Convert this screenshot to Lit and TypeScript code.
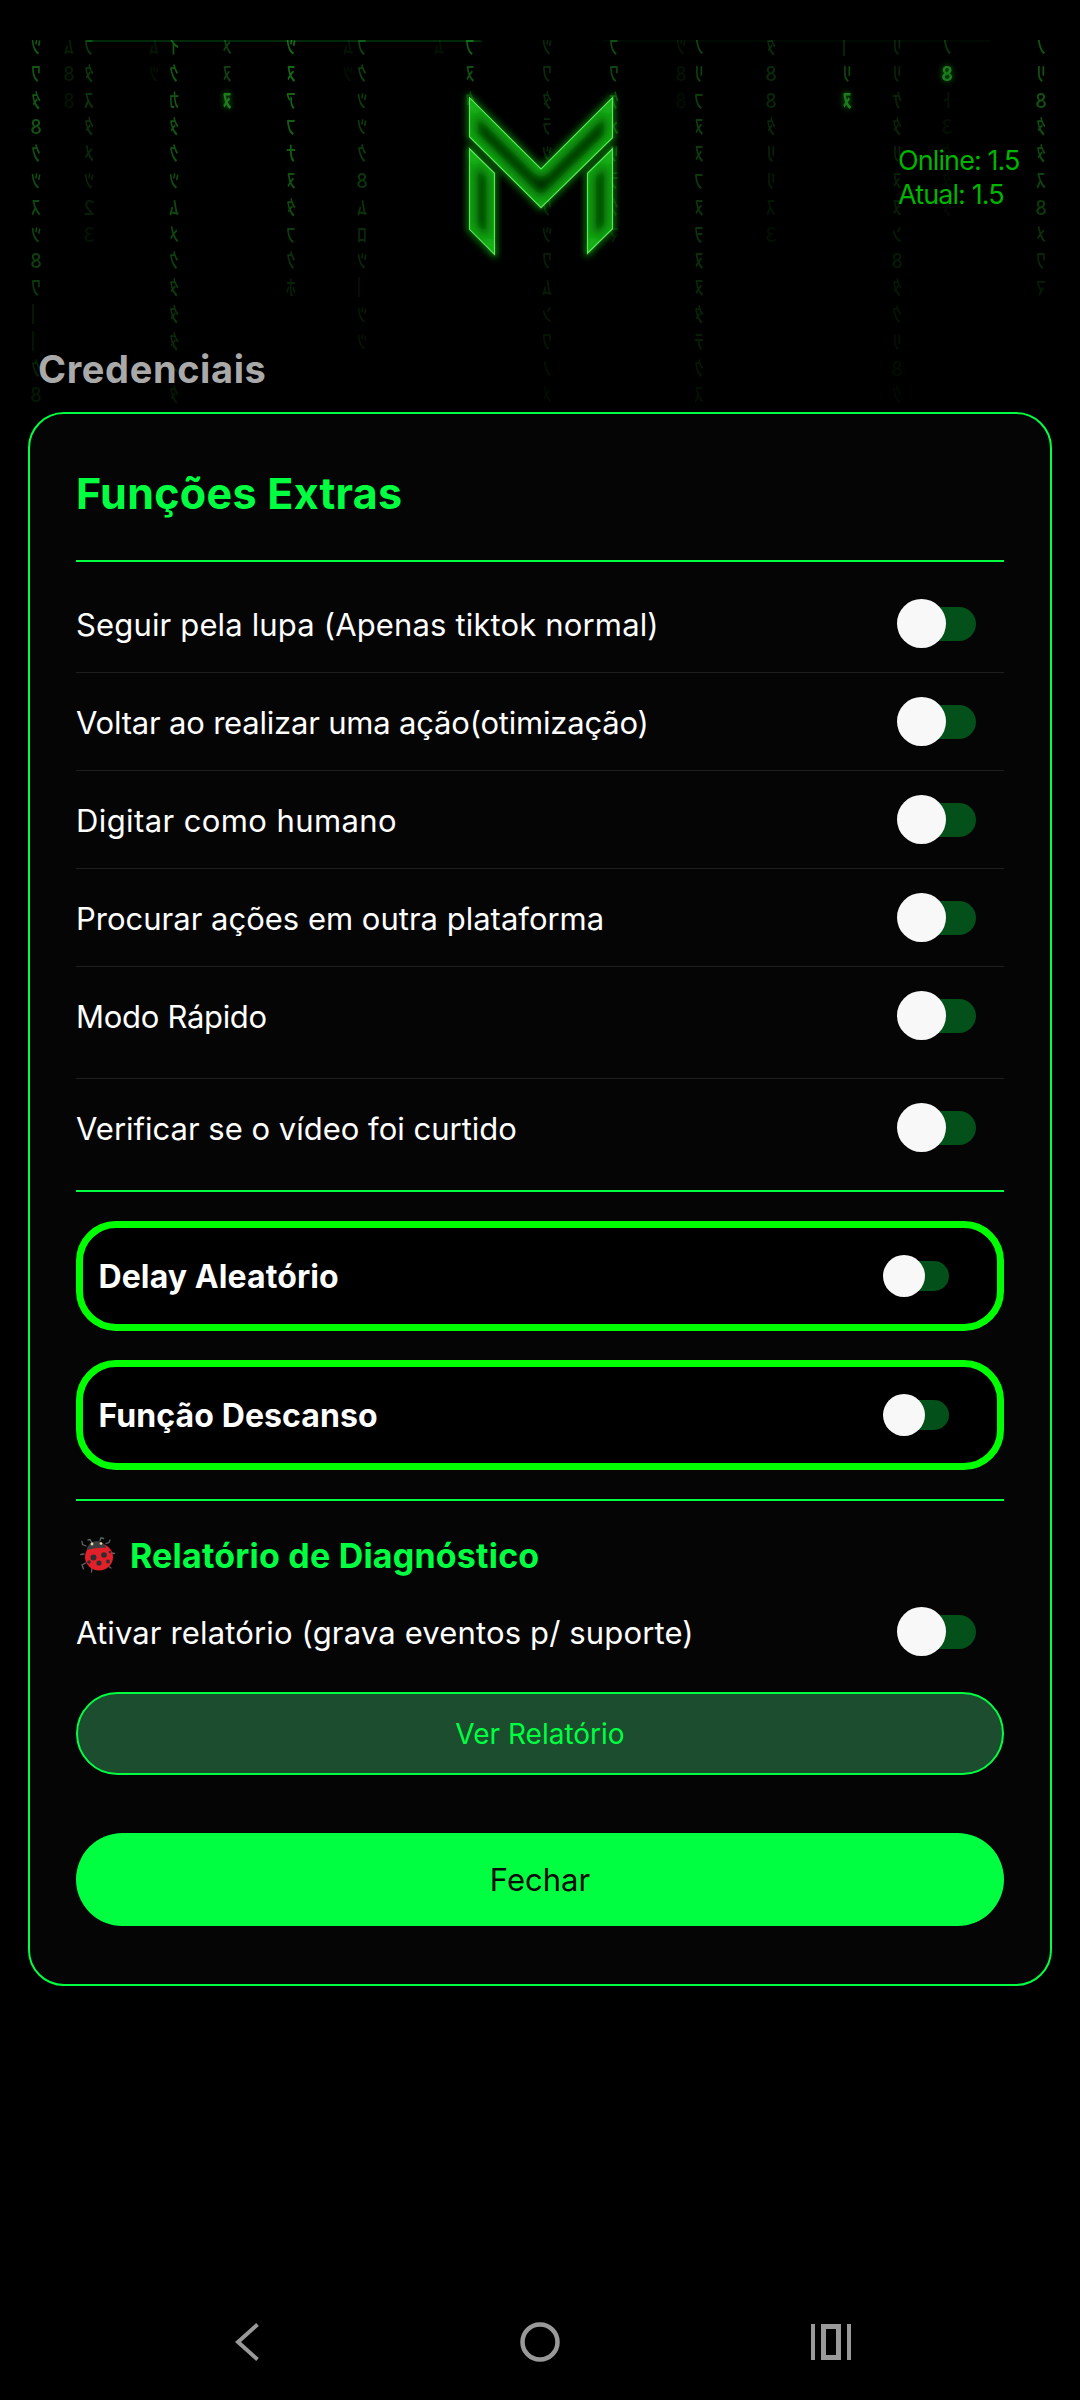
import { LitElement, html, css, svg } from "lit";
import { customElement } from "lit/decorators.js";

type Col = { x: number; chars: string; head: number; peak: number; };
const COLS: Col[] = [
  { x: 36, chars: "ﾂﾜﾀ8ｸﾂｽﾂ8ﾜ｜｜ｸ8", head: 0, peak: 0.42 },
  { x: 69, chars: "ﾑ88", head: 0, peak: 0.14 },
  { x: 89, chars: "ﾌﾀｽﾀﾒﾂ23", head: 0, peak: 0.26 },
  { x: 154, chars: "ﾑﾂ", head: 0, peak: 0.1 },
  { x: 174, chars: "ｲｸｶﾀｸﾂﾑﾒｸﾀﾀﾀｨﾀ", head: 0, peak: 0.42 },
  { x: 227, chars: "ﾒﾇﾇ", head: 2, peak: 0.5 },
  { x: 291, chars: "ﾂﾇｱﾌﾅﾇﾀﾌｸﾎ", head: 0, peak: 0.5 },
  { x: 348, chars: "ﾑﾂ", head: 0, peak: 0.09 },
  { x: 362, chars: "ﾌｸﾂﾂｸ8ﾑﾛﾂ｜ﾂﾂ", head: 0, peak: 0.3 },
  { x: 439, chars: "ﾑ", head: 0, peak: 0.08 },
  { x: 470, chars: "ﾌﾇﾀ", head: 0, peak: 0.42 },
  { x: 547, chars: "ﾂﾜﾀﾗﾂﾅﾜﾂﾜﾑﾝﾜﾉﾒ", head: 0, peak: 0.2 },
  { x: 614, chars: "ﾌﾜｹﾒﾘﾗｸﾏ", head: 0, peak: 0.34 },
  { x: 681, chars: "ﾂ88", head: 0, peak: 0.1 },
  { x: 699, chars: "ﾉﾘﾌﾇﾇﾌﾇｦﾇﾇﾀﾃｸｽ", head: 0, peak: 0.3 },
  { x: 771, chars: "ﾀ88ﾀﾘﾘｽ3", head: 0, peak: 0.2 },
  { x: 847, chars: "｜ﾘﾇ", head: 2, peak: 0.55 },
  { x: 897, chars: "ﾘﾘｹﾀﾘﾇﾇﾝ8ﾀｸﾘ8ｸ", head: 0, peak: 0.17 },
  { x: 947, chars: "ﾉ8ﾄ3ﾀﾀﾀ", head: 1, peak: 0.42 },
  { x: 1041, chars: "ﾉﾘ8ﾀﾀｽ8ﾒﾜﾏ", head: 0, peak: 0.4 },
];
const ROW_Y = 45 - 12;
const ROW_H = 26.8;

function cellOpacity(c: Col, i: number) {
  const n = c.chars.length;
  if (c.head > 0 && i < c.head) return c.peak * 0.6;
  if (c.head > 0 && i > c.head) return Math.max(0.05, c.peak * 0.25 * (1 - (i - c.head) / n));
  return Math.max(0.05, c.peak * (1 - 0.85 * Math.pow(i / Math.max(1, n), 2)));
}

@customElement("app-root")
export class AppRoot extends LitElement {
  static styles = css`
    :host {
      display: flex;
      flex-direction: column;
      min-height: 2400px;
      background: #000;
      color: #fff;
      font-family: Inter, "Noto Sans", sans-serif;
    }
    .head { position: relative; height: 412px; display: flex; align-items: flex-end; box-sizing: border-box; padding: 0 0 21px 38px; overflow: hidden; }
    .rain { position: absolute; left: 0; right: 0; top: 40px; height: 372px; overflow: hidden; filter: blur(.35px); }
    .edge { position: absolute; top: 40px; height: 2px; background: rgba(0,255,65,.16); border-radius: 2px 2px 0 0; }
    .edge.a { left: 86px; width: 396px; }
    .edge.b { left: 602px; width: 389px; background: rgba(0,255,65,.04); }
    .glyph {
      position: absolute; width: 14px; text-align: center; color: #2fd02f;
      font: 500 20px/26px "Noto Sans CJK JP", sans-serif; transform: scaleX(-1);
    }
    .glyph.hot { text-shadow: 0 0 6px #22d622; font-weight: 700; }
    .logo { position: absolute; left: 440px; top: 70px; overflow: visible; }
    .ver {
      position: absolute; left: 898px; top: 144px; color: #00b400;
      font-size: 27px; line-height: 33.5px; letter-spacing: -.9px;
    }
    .cred { position: relative; color: #a9a9a9; font-size: 38px; font-weight: 700; line-height: 44px; letter-spacing: .6px; }
    .card {
      margin: 0 28px; border: 2px solid #00ff41; border-radius: 36px; background: #050505;
      padding: 54px 46px 58px;
    }
    .title { margin: 0 0 42px; color: #00ff41; font-size: 43px; line-height: 50px; font-weight: 700; letter-spacing: .3px; }
    .hr { height: 2px; background: #00ff41; }
    .list { padding: 13px 0 14px; }
    .row { height: 97px; display: flex; align-items: center; justify-content: space-between; padding-right: 28px; font-size: 31px; border-bottom: 1px solid #1f1f1f; }
    .row.tall { height: 111px; align-items: flex-start; }
    .row.tall .lbl, .row.tall .sw { margin-top: 24px; }
    .row.tall .lbl { line-height: 49px; }
    .row.last { border-bottom: 0; }
    .lbl { position: relative; top: 1px; }
    .panels { display: flex; flex-direction: column; gap: 29px; padding: 29px 0; }
    .panel {
      height: 110px; box-sizing: border-box; border: 7px solid #00ff00; border-radius: 40px; background: #000;
      display: flex; align-items: center; justify-content: space-between; padding: 0 48px 0 15.5px;
      font-size: 32px; font-weight: 700; letter-spacing: .1px;
    }
    .sw { position: relative; width: 79px; height: 49px; flex: none; }
    .track { position: absolute; right: 0; top: 8px; width: 60px; height: 34px; border-radius: 17px; background: #04501a; }
    .thumb { position: absolute; left: 0; top: 0; width: 49px; height: 49px; border-radius: 50%; background: #f8f8f8; }
    .sw.sm { width: 66px; height: 42px; }
    .sw.sm .track { top: 6px; width: 50px; height: 30px; border-radius: 15px; }
    .sw.sm .thumb { width: 42px; height: 42px; }
    .diag { display: flex; align-items: center; gap: 14px; margin-top: 35px; height: 38px; color: #00ff41; font-size: 34px; font-weight: 700; letter-spacing: .2px; }
    .bug { width: 36px; height: 36px; flex: none; margin-left: 4px; }
    .report { height: 98px; display: flex; align-items: center; justify-content: space-between; padding-right: 28px; font-size: 31px; margin-top: 8px; }
    .btn { display: flex; align-items: center; justify-content: center; box-sizing: border-box; }
    .see { height: 83px; margin-top: 12px; border: 2px solid #00ff41; border-radius: 42px; background: #1b4d2e; color: #00ff41; font-size: 28px; }
    .close { height: 93px; margin-top: 58px; border-radius: 47px; background: #00ff41; color: #0a0a0a; font-size: 31px; }
    .nav { margin-top: auto; height: 116px; display: flex; align-items: center; padding: 0 0 0 235px; }
    .nav svg { display: block; flex: none; }
    .nav .back { margin-right: 261px; }
    .nav .home { margin-right: 251px; }
  `;

  private sw(small = false) {
    return html`<span class="sw ${small ? "sm" : ""}"><span class="track"></span><span class="thumb"></span></span>`;
  }

  private rain() {
    return COLS.map((c) =>
      [...c.chars].map((ch, i) => {
        const hot = c.head > 0 && i === c.head;
        return html`<span
          class="glyph ${hot ? "hot" : ""}"
          style="left:${c.x - 7}px;top:${ROW_Y + i * ROW_H - 40}px;opacity:${hot ? 0.6 : cellOpacity(c, i).toFixed(2)}"
          >${ch}</span
        >`;
      })
    );
  }

  private logo() {
    const shapes = [
      "M29.5 27.7L101 99L172.5 27.7V67.7L101 137.7L29.5 66.7Z",
      "M29.5 78.7L54.5 103.3V184.3L29.5 159.3Z",
      "M172.5 78.7L147.5 103.3V183.3L172.5 158.7Z",
    ];
    return html`<svg class="logo" width="202" height="210" viewBox="0 0 202 210" fill="none">
      <defs>
        <filter id="g1" x="-30%" y="-30%" width="160%" height="160%"><feGaussianBlur stdDeviation="3.5" /></filter>
        <filter id="g2" x="-30%" y="-30%" width="160%" height="160%"><feGaussianBlur stdDeviation="5.5" /></filter>
        <clipPath id="cl">${shapes.map((d) => svg`<path d=${d} />`)}</clipPath>
      </defs>
      ${shapes.map((d) => svg`<path d=${d} stroke="#14d014" stroke-width="4" filter="url(#g1)" opacity=".8" />`)}
      <g clip-path="url(#cl)">
        ${shapes.map((d) => svg`<path d=${d} fill="#052605" stroke="#16c016" stroke-width="10" filter="url(#g2)" />`)}
      </g>
      ${shapes.map((d) => svg`<path d=${d} stroke="#5ce85c" stroke-width="1.2" stroke-linejoin="miter" />`)}
    </svg>`;
  }

  private bug() {
    return html`<svg class="bug" viewBox="0 0 36 36" fill="none">
      <g stroke="#5f6668" stroke-width="1.3" stroke-linecap="round">
        <path d="M12 6L10 2.5L8 3M20 3.5L21 0.8L23.5 1.5" />
        <path d="M6 9L2.5 7.5L2 4.5M4 17L0.8 17.5M5.5 26L2 28L3.5 32M12 31L11.5 35M28 29L31 31M31 16L34.5 16.5M26 6.5L29 5.5L30 3" />
      </g>
      <ellipse cx="19" cy="20" rx="14" ry="13.5" fill="#e2202a" />
      <path d="M6.5 13C8 6.5 13 3.8 17 4C22 4.3 25.5 7.5 26 11C20 10 11 12 6.5 13Z" fill="#3b3f42" />
      <circle cx="12" cy="7" r="1.4" fill="#f0d9a8" /><circle cx="21" cy="6.5" r="1.3" fill="#f0d9a8" />
      <g fill="#2c2e31">
        <circle cx="13.5" cy="20.5" r="3" /><circle cx="24" cy="18" r="2.8" /><circle cx="19" cy="26" r="2.6" />
        <circle cx="9" cy="25" r="1.8" /><circle cx="28" cy="24.5" r="1.9" /><circle cx="30" cy="15" r="1.3" />
      </g>
    </svg>`;
  }

  private lbl(text: string, spacing: number) {
    return html`<span class="lbl" style="letter-spacing:${spacing}px">${text}</span>`;
  }

  render() {
    const rows: [string, number][] = [
      ["Seguir pela lupa (Apenas tiktok normal)", 0.15],
      ["Voltar ao realizar uma ação(otimização)", -0.2],
      ["Digitar como humano", 0.4],
      ["Procurar ações em outra plataforma", 0],
    ];
    return html`
      <div class="head">
        <div class="rain">${this.rain()}</div>
        <div class="edge a"></div>
        <div class="edge b"></div>
        ${this.logo()}
        <div class="ver">Online: 1.5<br />Atual: 1.5</div>
        <div class="cred">Credenciais</div>
      </div>
      <div class="card">
        <h1 class="title">Funções Extras</h1>
        <div class="hr"></div>
        <div class="list">
          ${rows.map(([r, s]) => html`<div class="row">${this.lbl(r, s)}${this.sw()}</div>`)}
          <div class="row tall">${this.lbl("Modo Rápido", -0.3)}${this.sw()}</div>
          <div class="row last">${this.lbl("Verificar se o vídeo foi curtido", 0)}${this.sw()}</div>
        </div>
        <div class="hr"></div>
        <div class="panels">
          <div class="panel"><span>Delay Aleatório</span>${this.sw(true)}</div>
          <div class="panel"><span>Função Descanso</span>${this.sw(true)}</div>
        </div>
        <div class="hr"></div>
        <div class="diag">${this.bug()}<span>Relatório de Diagnóstico</span></div>
        <div class="report">${this.lbl("Ativar relatório (grava eventos p/ suporte)", 0.15)}${this.sw()}</div>
        <div class="btn see">Ver Relatório</div>
        <div class="btn close">Fechar</div>
      </div>
      <div class="nav">
        <svg class="back" width="24" height="38" viewBox="0 0 24 38" fill="none"><path d="M22.5 1.5L3 19L22.5 36.5" stroke="#999" stroke-width="4" /></svg>
        <svg class="home" width="40" height="40" viewBox="0 0 40 40" fill="none"><circle cx="20" cy="20" r="17.5" stroke="#999" stroke-width="4.5" /></svg>
        <svg width="40" height="36" viewBox="0 0 40 36" fill="#999">
          <rect x="0" y="0" width="4" height="36" />
          <path fill-rule="evenodd" d="M10 0H30V36H10ZM15 5V31H25V5Z" />
          <rect x="36" y="0" width="4" height="36" />
        </svg>
      </div>
    `;
  }
}
